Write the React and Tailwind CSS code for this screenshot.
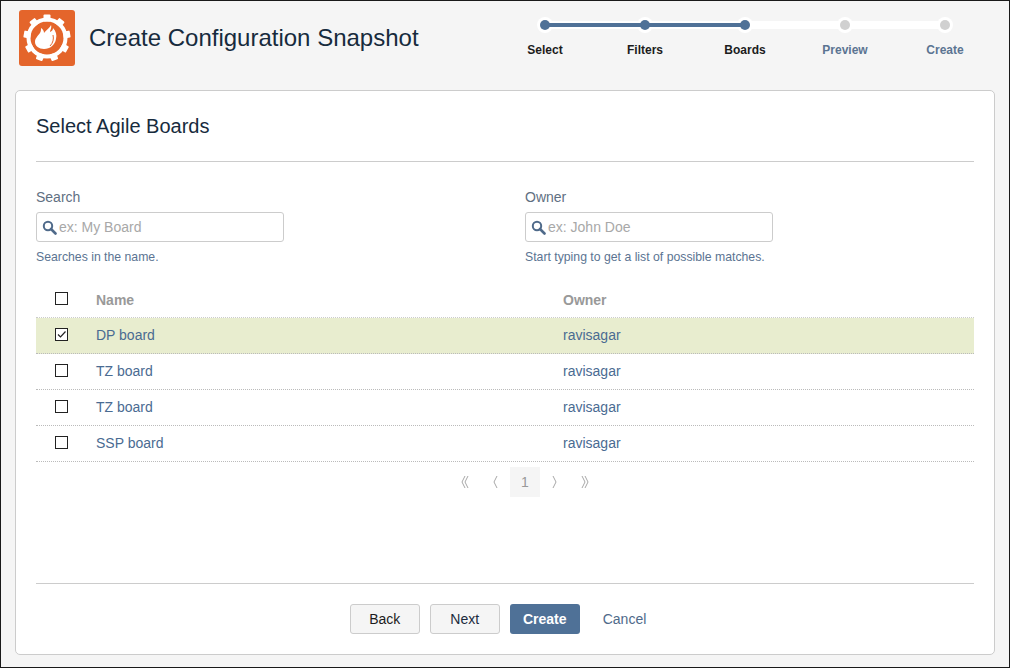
const steps = [
  { label: "Select", done: true },
  { label: "Filters", done: true },
  { label: "Boards", done: true },
  { label: "Preview", done: false },
  { label: "Create", done: false },
];

const boards = [
  { name: "DP board", owner: "ravisagar", checked: true },
  { name: "TZ board", owner: "ravisagar" },
  { name: "TZ board", owner: "ravisagar" },
  { name: "SSP board", owner: "ravisagar" },
];

function Logo() {
  const teeth = [0, 40, 80, 120, 160, 200, 240, 280, 320];
  return (
    <div className="flex h-[56px] w-[56px] items-center justify-center rounded-[3px] bg-[#e4652b]">
      <svg width="48" height="48" viewBox="0 0 48 48">
        {teeth.map((a) => (
          <rect key={a} x="20.500" y="0.500" width="7" height="7" rx="1" fill="#fff" transform={`rotate(${a} 24 24)`} />
        ))}
        <circle cx="24" cy="24" r="18.500" fill="none" stroke="#fff" strokeWidth="4" />
        <path
          d="M28 11c1 3-1 5-1 7 2-1 3-2 3-4 3 3 4 7 3 11-1 6-6 10-12 10-5 0-9-3-9-7 0-4 3-6 5-9 1-2 1-3 1-5 2 1 3 3 3 5 2-3 6-5 7-8z"
          fill="#fff"
        />
        <path d="M30 21c1 4 0 8-3 11" fill="none" stroke="#e4652b" strokeWidth="1" />
      </svg>
    </div>
  );
}

function Stepper() {
  return (
    <div className="relative flex w-[500px]">
      <div className="absolute left-[50px] top-[4px] h-[8px] w-[400px] bg-white" />
      <div className="absolute left-[50px] top-[6px] z-10 h-[4px] w-[200px] bg-[#4f7197]" />
      {steps.map((s) => (
        <div key={s.label} className="relative flex w-[100px] flex-col items-center">
          <div className="flex h-[16px] w-[16px] items-center justify-center rounded-full bg-white">
            <div className={`relative z-20 h-[10px] w-[10px] rounded-full ${s.done ? "bg-[#4f7197]" : "bg-[#d0d0d0]"}`} />
          </div>
          <div className={`mt-[10px] text-[12px] font-bold leading-[14px] ${s.done ? "text-[#1c1c1c]" : "text-[#5b7492]"}`}>
            {s.label}
          </div>
        </div>
      ))}
    </div>
  );
}

function SearchIcon() {
  return (
    <svg width="15" height="15" viewBox="0 0 15 15" className="shrink-0">
      <circle cx="6" cy="6" r="4.200" fill="none" stroke="#4f6a8a" strokeWidth="2" />
      <path d="M9 9l4.500 4.500" stroke="#4f6a8a" strokeWidth="2.600" strokeLinecap="round" />
    </svg>
  );
}

function Field({ label, placeholder, help }) {
  return (
    <div className="w-[248px]">
      <div className="text-[14px] leading-[20px] text-[#5f6f82]">{label}</div>
      <div className="mt-[5px] flex h-[30px] items-center gap-[2px] rounded-[3px] border border-[#cccccc] bg-white pl-[5px]">
        <SearchIcon />
        <span className="text-[14px] text-[#a8a8a8]">{placeholder}</span>
      </div>
      <div className="mt-[7px] w-[300px] text-[12.250px] leading-[16px] text-[#5b7492]">{help}</div>
    </div>
  );
}

function Check({ checked }) {
  return (
    <div className="mb-[2px] flex h-[13px] w-[13px] items-center justify-center border border-[#222222] bg-white">
      {checked && (
        <svg width="11" height="11" viewBox="0 0 11 11">
          <path d="M2 5.500l2.500 2.500 5-5.500" fill="none" stroke="#222" strokeWidth="1.200" />
        </svg>
      )}
    </div>
  );
}

function Chevrons({ children }) {
  return (
    <svg width="12" height="14" viewBox="0 0 12 14" fill="none" stroke="#a8a8a8" strokeWidth="1">
      {children}
    </svg>
  );
}

function Pager() {
  return (
    <div className="mt-[5px] flex h-[30px] items-center justify-center pl-[40px] text-[14px] text-[#999999]">
      <div className="flex w-[30px] justify-center">
        <Chevrons>
          <path d="M6 1L3 7l3 6M9 1L6 7l3 6" />
        </Chevrons>
      </div>
      <div className="flex w-[30px] justify-center">
        <Chevrons>
          <path d="M8 1L5 7l3 6" />
        </Chevrons>
      </div>
      <div className="flex h-[30px] w-[30px] items-center justify-center bg-[#f5f5f5]">1</div>
      <div className="flex w-[30px] justify-center">
        <Chevrons>
          <path d="M4 1l3 6-3 6" />
        </Chevrons>
      </div>
      <div className="flex w-[30px] justify-center">
        <Chevrons>
          <path d="M3 1l3 6-3 6M6 1l3 6-3 6" />
        </Chevrons>
      </div>
    </div>
  );
}

export default function App() {
  return (
    <div className="flex h-[668px] w-[1010px] flex-col border border-[#1a1a1a] bg-[#f5f5f5] font-['Liberation_Sans',Arial,sans-serif]">
      <div className="flex h-[89px] shrink-0 items-start justify-between">
        <div className="flex items-center">
          <div className="ml-[18px] mt-[9px]">
            <Logo />
          </div>
          <h1 className="ml-[14px] mt-[9px] text-[24px] font-normal text-[#172b3d]">Create Configuration Snapshot</h1>
        </div>
        <div className="mr-[14px] mt-[16px]">
          <Stepper />
        </div>
      </div>

      <div className="mx-[14px] flex h-[565px] flex-col rounded-[5px] border border-[#cccccc] bg-white px-[20px]">
        <div className="flex h-[71px] shrink-0 items-center border-b border-[#cccccc]">
          <h2 className="text-[20px] font-normal text-[#172b3d]">Select Agile Boards</h2>
        </div>

        <div className="mt-[25px] flex">
          <div className="w-[489px]">
            <Field label="Search" placeholder="ex: My Board" help="Searches in the name." />
          </div>
          <Field label="Owner" placeholder="ex: John Doe" help="Start typing to get a list of possible matches." />
        </div>

        <div className="mt-[17px]">
          <div className="flex h-[36px] items-center border-b border-dotted border-[#cccccc] text-[14px] font-bold text-[#999999]">
            <div className="flex w-[60px] justify-center pr-[10px]">
              <Check />
            </div>
            <div className="w-[467px] pt-[2px]">Name</div>
            <div className="pt-[2px]">Owner</div>
          </div>
          {boards.map((b, i) => (
            <div
              key={i}
              className={`flex h-[36px] items-center border-b border-dotted border-[#bbbbbb] text-[14px] text-[#4a6b92] ${b.checked ? "bg-[#e8edcf]" : ""}`}
            >
              <div className="flex w-[60px] justify-center pr-[10px]">
                <Check checked={b.checked} />
              </div>
              <div className="w-[467px]">{b.name}</div>
              <div>{b.owner}</div>
            </div>
          ))}
        </div>

        <Pager />

        <div className="mt-auto flex h-[71px] shrink-0 items-start justify-center border-t border-[#cccccc] pr-[14px] pt-[20px] text-[14px]">
          <button className="h-[30px] w-[70px] rounded-[3px] border border-[#cccccc] bg-[#f5f5f5] text-[#1c1c1c]">Back</button>
          <button className="ml-[10px] h-[30px] w-[70px] rounded-[3px] border border-[#cccccc] bg-[#f5f5f5] text-[#1c2b3d]">Next</button>
          <button className="ml-[10px] h-[30px] w-[70px] rounded-[3px] bg-[#4f7197] font-bold text-white">Create</button>
          <button className="ml-[23px] h-[30px] text-[#4f6a8a]">Cancel</button>
        </div>
      </div>
    </div>
  );
}
